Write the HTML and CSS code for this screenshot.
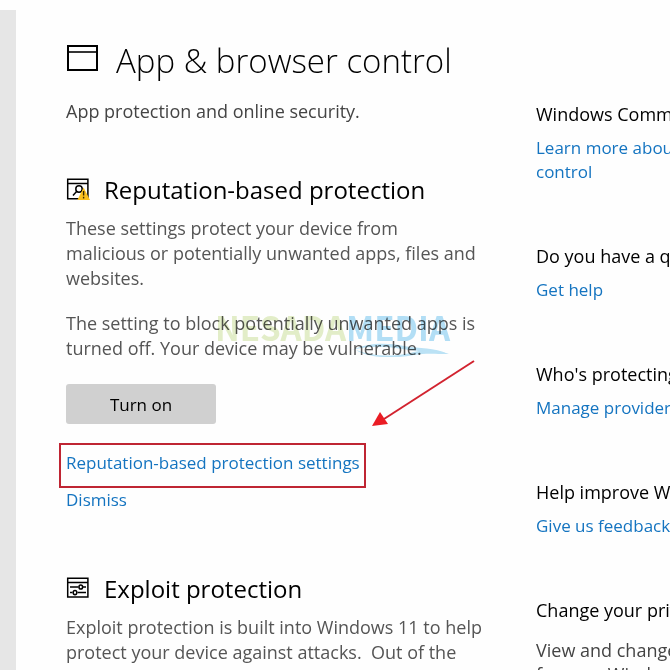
FILE: index.html
```html
<!DOCTYPE html>
<html lang="en">
<head>
    <meta charset="UTF-8">
    <meta name="viewport" content="width=device-width, initial-scale=1.0">
    <title>App &amp; browser control</title>
    <link rel="stylesheet" href="styles.css">
</head>
<body>
    <div class="page">
        <div class="rail"></div>

        <main class="content">
            <header class="page-header">
                <svg class="title-icon" viewBox="0 0 32 26" fill="none" stroke="#000" stroke-width="2" aria-hidden="true">
                    <path d="M2 1h29v24H2z"/>
                    <path d="M2 7h29" stroke-width="1.6"/>
                </svg>
                <h1>App &amp; browser control</h1>
            </header>
            <p class="intro">App protection and online security.</p>

            <section class="group">
                <div class="group-title">
                    <svg class="group-icon" viewBox="0 0 24 24" fill="none" stroke="#000" stroke-width="1.5" aria-hidden="true">
                        <path d="M1.7 1.2h20.2v19.6H1.7zM1.7 5.4h20.2"/>
                        <circle cx="13" cy="11" r="3.2"/>
                        <path d="M10.8 13.3L7 17.4"/>
                        <path d="M17.6 9.6L24 22H11.4z" fill="#fcc01e" stroke="none"/>
                        <path d="M17.6 13v4.6M17.6 18.8v1.8" stroke="#3b2a00" stroke-width="1.4"/>
                    </svg>
                    <h2>Reputation-based protection</h2>
                </div>
                <p>These settings protect your device from<br>malicious or potentially unwanted apps, files and websites.</p>
                <p class="status">The setting to block potentially unwanted apps is turned off. Your device may be vulnerable.</p>
                <button type="button" class="btn">Turn on</button>
                <a href="#" class="settings-link">Reputation-based protection settings</a>
                <a href="#" class="dismiss-link">Dismiss</a>

                <div class="watermark" aria-hidden="true">
                    <span class="wm-green">NESADA</span><span class="wm-blue">MEDIA</span>
                    <svg class="wm-wave" viewBox="0 0 98 14" fill="#8fd0f0">
                        <path d="M0 7C18 -1 36 0 52 3C68 6 82 4 96 11C78 9 66 8 50 6C32 3 16 3 0 7z"/>
                        <path d="M4 7C24 15 48 13 62 9C74 6 86 7 97 11C82 11 74 10 62 12C42 16 16 15 4 7z"/>
                    </svg>
                </div>
                <svg class="arrow" viewBox="0 0 104 68" aria-hidden="true">
                    <path d="M102 1L12 59" stroke="#d2232f" stroke-width="2"/>
                    <path d="M0 66L8 52L16 64z" fill="#ea1c24"/>
                </svg>
            </section>

            <section class="group">
                <div class="group-title">
                    <svg class="group-icon" viewBox="0 0 24 24" fill="none" stroke="#000" stroke-width="1.5" aria-hidden="true">
                        <path d="M1.7 1.2h20.2v18.8H1.7zM1.7 5.4h20.2"/>
                        <path d="M4 10h8.5M17 10h3M4 15.6h2.5M11.5 15.6H20"/>
                        <ellipse cx="14.8" cy="10" rx="1.8" ry="2.1"/>
                        <ellipse cx="9" cy="15.6" rx="1.8" ry="2.1"/>
                    </svg>
                    <h2>Exploit protection</h2>
                </div>
                <p>Exploit protection is built into Windows 11 to help protect your device against attacks.&nbsp; Out of the box, your device is already set up with the protection settings that work best for most people.</p>
            </section>
        </main>

        <aside class="sidebar">
            <section>
                <h3>Windows Community videos</h3>
                <a href="#">Learn more about App &amp; browser control</a>
            </section>
            <section>
                <h3>Do you have a question?</h3>
                <a href="#">Get help</a>
            </section>
            <section>
                <h3>Who's protecting me?</h3>
                <a href="#">Manage providers</a>
            </section>
            <section>
                <h3>Help improve Windows Security</h3>
                <a href="#">Give us feedback</a>
            </section>
            <section>
                <h3>Change your privacy settings</h3>
                <p>View and change privacy settings for your Windows 11 device.</p>
            </section>
        </aside>
    </div>
</body>
</html>
```
FILE: styles.css
```css
* {
    margin: 0;
    padding: 0;
    box-sizing: border-box;
}

body {
    font-family: 'Segoe UI', 'Open Sans', 'Noto Sans', sans-serif;
    font-size: 18px;
    line-height: 25px;
    color: #555;
    background: #fefefe;
    overflow: hidden;
}

a {
    color: #1474c0;
    font-size: 17px;
    text-decoration: none;
}

a:hover {
    color: #666;
}

.page {
    display: flex;
    height: 100vh;
    padding-top: 10px;
}

.rail {
    flex: 0 0 16px;
    background: #e6e6e6;
}

.content {
    flex: 0 0 420px;
    margin-left: 50px;
    padding-top: 30px;
}

.page-header {
    display: flex;
    align-items: center;
    gap: 18px;
}

.title-icon {
    width: 32px;
    height: 26px;
    margin-bottom: 6px;
}

h1 {
    font-size: 33px;
    font-weight: 300;
    line-height: 42px;
    color: #000;
    white-space: nowrap;
}

.intro {
    margin-top: 17px;
    color: #444;
}

.group {
    position: relative;
    margin-top: 52px;
}

.group + .group {
    margin-top: 63px;
}

.group-title {
    display: flex;
    align-items: center;
    gap: 14px;
    margin-bottom: 12px;
}

.group-icon {
    width: 24px;
    height: 24px;
}

h2 {
    font-size: 24px;
    font-weight: 400;
    line-height: 28px;
    color: #000;
    white-space: nowrap;
}

.status {
    margin-top: 20px;
}

.btn {
    display: block;
    width: 150px;
    height: 40px;
    margin-top: 23px;
    border: none;
    border-radius: 3px;
    background: #d0d0d0;
    color: #000;
    font: inherit;
    font-size: 17px;
    cursor: pointer;
}

.btn:hover {
    background: #c0c0c0;
}

.settings-link,
.dismiss-link {
    display: block;
    width: fit-content;
}

/* red frame around the link */
.settings-link {
    margin: 19px 0 0 -7px;
    padding: 5px 4px 11px 5px;
    border: 2px solid #bf2533;
}

.dismiss-link {
    margin-top: -1px;
}

.watermark {
    position: absolute;
    top: 129px;
    left: 149px;
    font-family: 'Noto Sans CJK SC', sans-serif;
    font-size: 33px;
    font-weight: 700;
    line-height: 44px;
    white-space: nowrap;
    opacity: 0.6;
    pointer-events: none;
    mix-blend-mode: multiply;
}

.wm-green {
    color: #d0e2a4;
}

.wm-blue {
    color: #80caf0;
}

.wm-wave {
    position: absolute;
    right: 0;
    top: 38px;
    width: 98px;
    height: 14px;
}

.arrow {
    position: absolute;
    top: 184px;
    left: 306px;
    width: 104px;
    height: 68px;
}

.sidebar {
    flex: 0 0 280px;
    margin-left: 50px;
    padding-top: 92px;
    line-height: 24px;
}

.sidebar section {
    margin-bottom: 60px;
}

.sidebar h3 {
    margin-bottom: 10px;
    font-size: 18px;
    font-weight: 400;
    color: #000;
}

.sidebar a {
    display: block;
}

.sidebar p {
    margin-top: 16px;
    color: #444;
}
```
